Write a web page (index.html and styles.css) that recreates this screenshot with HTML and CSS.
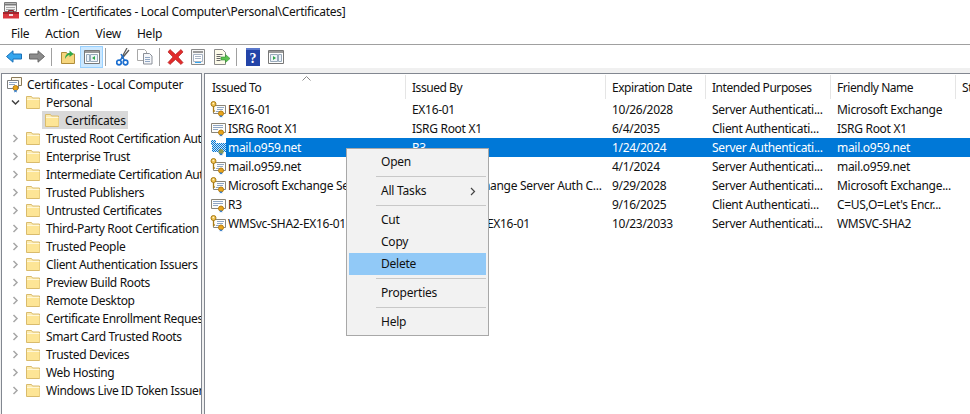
FILE: index.html
```html
<!DOCTYPE html>
<html lang="en">
<head>
<meta charset="utf-8">
<title>certlm</title>
<link rel="stylesheet" href="styles.css">
</head>
<body>
<svg class="defs" width="0" height="0" aria-hidden="true">
  <defs>
    <pattern id="dither" width="2" height="2" patternUnits="userSpaceOnUse">
      <path d="M0 0h2v2H0z" fill="#0078d7"/>
      <path d="M0 0h1v1H0zM1 1h1v1H1z" fill="#cfe2f3"/>
    </pattern>
    <symbol id="folder" viewBox="0 0 16 16">
      <path d="M1.500 2.500h5l1 1.500h7v10.500h-13z" fill="#fcebb0" stroke="#d9bb6c"/>
      <path d="M2 6h12.500v8H2z" fill="#fde596"/>
      <path d="M2 5.500h12.500" stroke="#fff7d8"/>
    </symbol>
    <symbol id="chev-r" viewBox="0 0 9 9">
      <path d="M2.500 1l3.500 3.500L2.500 8" fill="none" stroke="#a6a6a6" stroke-width="1.500"/>
    </symbol>
    <symbol id="chev-d" viewBox="0 0 9 9">
      <path d="M1 2.500l3.500 3.500L8 2.500" fill="none" stroke="#404040" stroke-width="1.500"/>
    </symbol>
    <symbol id="root" viewBox="0 0 17 17">
      <path d="M5.500 1.500h10v8h-10z" fill="#fdf8ea" stroke="#8a7a58"/>
      <path d="M1.500 4.500h11v8h-11z" fill="#fff" stroke="#7d7d7d"/>
      <path d="M3 6.500h8M3 8.500h6" stroke="#8fa6c4"/>
      <circle cx="9.500" cy="12" r="2.500" fill="#e8a41c" stroke="#b77d10"/>
      <path d="M8.300 14v2.500l1.200-.8 1.200.8V14" fill="#3a7fc8"/>
    </symbol>
    <symbol id="cert" viewBox="0 0 17 17">
      <path d="M1.500 3.500h14v9h-14z" fill="#fdfdfb" stroke="#8a8578"/>
      <path d="M3 5.500h10M3 7.500h10M3 9.500h5" stroke="#8fa6c4"/>
      <circle cx="11" cy="12.500" r="2.500" fill="#e8a41c" stroke="#b77d10"/>
      <path d="M9.800 14.500v2l1.200-.8 1.200.8v-2" fill="#3a7fc8"/>
    </symbol>
    <symbol id="certkey" viewBox="0 0 17 17">
      <path d="M3.500 4.500h12v8h-12z" fill="#fdfdfb" stroke="#8a8578"/>
      <path d="M7 6.500h7M7 8.500h6M6 10.500h4" stroke="#8fa6c4"/>
      <circle cx="3.500" cy="3" r="2.500" fill="#f1c556" stroke="#a87a14"/>
      <circle cx="3.300" cy="2.500" r=".8" fill="#fff6d0"/>
      <path d="M3.500 5.500v5l1.500-.8" fill="none" stroke="#a87a14" stroke-width="1.300"/>
      <circle cx="11" cy="12.500" r="2.500" fill="#e8a41c" stroke="#b77d10"/>
      <path d="M9.800 14.500v2l1.200-.8 1.200.8v-2" fill="#3a7fc8"/>
    </symbol>
    <symbol id="certsel" viewBox="0 0 17 17">
      <path d="M1 1h5v3h10v9h-2.500a2.500 2.500 0 0 1-5 0H2V6H1z" fill="url(#dither)"/>
      <circle cx="11" cy="12.500" r="2.500" fill="#8a9a5a"/>
      <path d="M9.800 14.500v2l1.200-.8 1.200.8v-2" fill="#2a78c8"/>
    </symbol>
  </defs>
</svg>

<header class="titlebar">
  <svg width="18" height="18" viewBox="0 0 18 18" aria-hidden="true">
    <path d="M1.500 .5h12v9h-12z" fill="#f3f3f3" stroke="#7a7a7a"/>
    <path d="M1.500 2.500h12" stroke="#7a7a7a" stroke-width="2"/>
    <path d="M3 5.500h9M3 7.500h9" stroke="#a8a8a8"/>
    <path d="M5.500 8.500h5v2h-5z" fill="none" stroke="#8f1e26"/>
    <path d="M0 10h16v6.500H0z" fill="#d8363e"/>
    <path d="M0 10h16v2H0z" fill="#a5242c"/>
    <path d="M6 12h4v2H6z" fill="#f5dcde"/>
  </svg>
  <span>certlm - [Certificates - Local Computer\Personal\Certificates]</span>
</header>

<nav class="menubar">
  <span>File</span><span>Action</span><span>View</span><span>Help</span>
</nav>

<div class="toolbar">
  <svg width="16" height="13" viewBox="0 0 16 13" aria-hidden="true"><path d="M.5 6.500L7 .8V4h8.500v5H7v3.200z" fill="#35a6ee" stroke="#1a70b8"/></svg>
  <svg class="ml7" width="16" height="13" viewBox="0 0 16 13" aria-hidden="true"><path d="M15.500 6.500L9 .8V4H.5v5H9v3.200z" fill="#8c8c8c" stroke="#666"/></svg>
  <i class="tsep ml6"></i>
  <svg class="ml8" width="16" height="16" viewBox="0 0 16 16" aria-hidden="true"><path d="M1.500 3.500h5l1 1.500h7v9.500h-13z" fill="#f6d67e" stroke="#b08d3a"/><path d="M5 10c0-3.500 2-6 4.500-6V1.500l4 3.500-4 3V6C8 6 6 8 5 10z" fill="#2fa84a"/></svg>
  <span class="tbtn ml4"><svg width="16" height="16" viewBox="0 0 16 16" aria-hidden="true"><path d="M.5 1.500h15v13H.5z" fill="#fff" stroke="#777"/><path d="M1 2h14v2H1z" fill="#9a9a9a"/><path d="M2.500 5.500h3v7h-3zM6.500 5.500h7v7h-7z" fill="#eef3f8" stroke="#9ab"/><path d="M11 7v4L8 9z" fill="#2fa84a"/></svg></span>
  <i class="tsep ml2"></i>
  <svg class="ml10" width="14" height="18" viewBox="0 0 14 18" aria-hidden="true"><path d="M11 0L5.500 10M13 2L6 10.500" stroke="#5c5c5c" stroke-width="1.300" fill="none"/><circle cx="3" cy="14.500" r="2.300" fill="none" stroke="#1c6fd0" stroke-width="1.700"/><circle cx="9.500" cy="14.500" r="2.300" fill="none" stroke="#1c6fd0" stroke-width="1.700"/><path d="M4 12.500L7.500 8M8.500 12.500L5 6" stroke="#1c6fd0" stroke-width="1.500"/></svg>
  <svg class="ml7" width="16" height="16" viewBox="0 0 16 16" aria-hidden="true"><path d="M.5.500h7l2 2v9h-9z" fill="#fff" stroke="#a8a8a8"/><path d="M6.500 4.500h6l2.500 2.500v8h-8.500z" fill="#f4f6f9" stroke="#8a8f98"/><path d="M8 8.500h5M8 10.500h5M8 12.500h5" stroke="#8fa6c4"/></svg>
  <i class="tsep ml6"></i>
  <svg class="ml7" width="17" height="16" viewBox="0 0 17 16" aria-hidden="true"><path d="M1 3l2-2.500 5.500 5L14 .5 16 3l-5 5 5 5.500-2 2-5.500-5-5.500 5-2-2L6 8z" fill="#e22b2b" stroke="#a81818" stroke-width=".6"/></svg>
  <svg class="ml6" width="16" height="16" viewBox="0 0 16 16" aria-hidden="true"><path d="M1.500.5h13v15h-13z" fill="#f6f6f6" stroke="#8a8a8a"/><path d="M3 2h10v2H3z" fill="#9a9a9a"/><path d="M3.500 5.500h9v7h-9z" fill="#fff" stroke="#a8b4c4"/><path d="M5 7.500h6M5 9.500h6" stroke="#a8b4c4"/><path d="M5 13.500h6" stroke="#35a6ee"/></svg>
  <svg class="ml7" width="17" height="16" viewBox="0 0 17 16" aria-hidden="true"><path d="M1.500.5h8l3 3v12h-11z" fill="#fdfbe9" stroke="#8a8a8a"/><path d="M3.500 5.500h6M3.500 7.500h4M3.500 9.500h4M3.500 11.500h4" stroke="#666"/><path d="M8 8h4.500V5.500L17 9.500l-4.500 4V11H8z" fill="#5cc34f" stroke="#2f8a30" stroke-width=".6"/></svg>
  <i class="tsep ml6"></i>
  <svg class="ml9" width="14" height="18" viewBox="0 0 14 18" aria-hidden="true"><path d="M0 0h14v18H0z" fill="#2344a8"/><path d="M0 0h14v2H0z" fill="#5a78cc"/><text x="7" y="14.500" class="helpq">?</text></svg>
  <svg class="ml8" width="16" height="16" viewBox="0 0 16 16" aria-hidden="true"><path d="M.5 1.500h15v13H.5z" fill="#fff" stroke="#777"/><path d="M1 2h14v2H1z" fill="#9a9a9a"/><path d="M2.500 5.500h7v7h-7zM10.500 5.500h3v7h-3z" fill="#eef3f8" stroke="#9ab"/><path d="M5 7v4L8 9z" fill="#2fa84a"/></svg>
</div>

<main class="panes">
  <aside class="tree">
    <div class="node"><svg class="rooticon" width="17" height="17" aria-hidden="true"><use href="#root"/></svg><span>Certificates - Local Computer</span></div>
    <div class="node l1"><svg class="chev" width="9" height="9" aria-hidden="true"><use href="#chev-d"/></svg><svg class="fld" width="16" height="16" aria-hidden="true"><use href="#folder"/></svg><span>Personal</span></div>
    <div class="node l2"><span class="curbox"><svg class="fld" width="16" height="16" aria-hidden="true"><use href="#folder"/></svg><span>Certificates</span></span></div>
    <div class="node l1"><svg class="chev" width="9" height="9" aria-hidden="true"><use href="#chev-r"/></svg><svg class="fld" width="16" height="16" aria-hidden="true"><use href="#folder"/></svg><span>Trusted Root Certification Authorities</span></div>
    <div class="node l1"><svg class="chev" width="9" height="9" aria-hidden="true"><use href="#chev-r"/></svg><svg class="fld" width="16" height="16" aria-hidden="true"><use href="#folder"/></svg><span>Enterprise Trust</span></div>
    <div class="node l1"><svg class="chev" width="9" height="9" aria-hidden="true"><use href="#chev-r"/></svg><svg class="fld" width="16" height="16" aria-hidden="true"><use href="#folder"/></svg><span>Intermediate Certification Authorities</span></div>
    <div class="node l1"><svg class="chev" width="9" height="9" aria-hidden="true"><use href="#chev-r"/></svg><svg class="fld" width="16" height="16" aria-hidden="true"><use href="#folder"/></svg><span>Trusted Publishers</span></div>
    <div class="node l1"><svg class="chev" width="9" height="9" aria-hidden="true"><use href="#chev-r"/></svg><svg class="fld" width="16" height="16" aria-hidden="true"><use href="#folder"/></svg><span>Untrusted Certificates</span></div>
    <div class="node l1"><svg class="chev" width="9" height="9" aria-hidden="true"><use href="#chev-r"/></svg><svg class="fld" width="16" height="16" aria-hidden="true"><use href="#folder"/></svg><span>Third-Party Root Certification Authorities</span></div>
    <div class="node l1"><svg class="chev" width="9" height="9" aria-hidden="true"><use href="#chev-r"/></svg><svg class="fld" width="16" height="16" aria-hidden="true"><use href="#folder"/></svg><span>Trusted People</span></div>
    <div class="node l1"><svg class="chev" width="9" height="9" aria-hidden="true"><use href="#chev-r"/></svg><svg class="fld" width="16" height="16" aria-hidden="true"><use href="#folder"/></svg><span>Client Authentication Issuers</span></div>
    <div class="node l1"><svg class="chev" width="9" height="9" aria-hidden="true"><use href="#chev-r"/></svg><svg class="fld" width="16" height="16" aria-hidden="true"><use href="#folder"/></svg><span>Preview Build Roots</span></div>
    <div class="node l1"><svg class="chev" width="9" height="9" aria-hidden="true"><use href="#chev-r"/></svg><svg class="fld" width="16" height="16" aria-hidden="true"><use href="#folder"/></svg><span>Remote Desktop</span></div>
    <div class="node l1"><svg class="chev" width="9" height="9" aria-hidden="true"><use href="#chev-r"/></svg><svg class="fld" width="16" height="16" aria-hidden="true"><use href="#folder"/></svg><span>Certificate Enrollment Requests</span></div>
    <div class="node l1"><svg class="chev" width="9" height="9" aria-hidden="true"><use href="#chev-r"/></svg><svg class="fld" width="16" height="16" aria-hidden="true"><use href="#folder"/></svg><span>Smart Card Trusted Roots</span></div>
    <div class="node l1"><svg class="chev" width="9" height="9" aria-hidden="true"><use href="#chev-r"/></svg><svg class="fld" width="16" height="16" aria-hidden="true"><use href="#folder"/></svg><span>Trusted Devices</span></div>
    <div class="node l1"><svg class="chev" width="9" height="9" aria-hidden="true"><use href="#chev-r"/></svg><svg class="fld" width="16" height="16" aria-hidden="true"><use href="#folder"/></svg><span>Web Hosting</span></div>
    <div class="node l1"><svg class="chev" width="9" height="9" aria-hidden="true"><use href="#chev-r"/></svg><svg class="fld" width="16" height="16" aria-hidden="true"><use href="#folder"/></svg><span>Windows Live ID Token Issuer</span></div>
  </aside>

  <section class="list">
    <div class="hdr">
      <span class="hc c1">Issued To<svg class="sort" width="9" height="5" viewBox="0 0 9 5" aria-hidden="true"><path d="M.5 4.500l4-4 4 4" fill="none" stroke="#8a8a8a"/></svg></span>
      <span class="hc c2">Issued By</span>
      <span class="hc c3">Expiration Date</span>
      <span class="hc c4">Intended Purposes</span>
      <span class="hc c5">Friendly Name</span>
      <span class="hc c6">St</span>
    </div>
    <div class="row"><span class="cell c1"><svg width="17" height="17" aria-hidden="true"><use href="#certkey"/></svg><b class="nm">EX16-01</b></span><span class="cell c2">EX16-01</span><span class="cell c3">10/26/2028</span><span class="cell c4">Server Authenticati...</span><span class="cell c5">Microsoft Exchange</span></div>
    <div class="row"><span class="cell c1"><svg width="17" height="17" aria-hidden="true"><use href="#cert"/></svg><b class="nm">ISRG Root X1</b></span><span class="cell c2">ISRG Root X1</span><span class="cell c3">6/4/2035</span><span class="cell c4">Client Authenticati...</span><span class="cell c5">ISRG Root X1</span></div>
    <div class="row sel"><span class="cell c1"><svg width="17" height="17" aria-hidden="true"><use href="#certsel"/></svg><b class="nm">mail.o959.net</b></span><span class="cell c2">R3</span><span class="cell c3">1/24/2024</span><span class="cell c4">Server Authenticati...</span><span class="cell c5">mail.o959.net</span></div>
    <div class="row"><span class="cell c1"><svg width="17" height="17" aria-hidden="true"><use href="#certkey"/></svg><b class="nm">mail.o959.net</b></span><span class="cell c2">R3</span><span class="cell c3">4/1/2024</span><span class="cell c4">Server Authenticati...</span><span class="cell c5">mail.o959.net</span></div>
    <div class="row"><span class="cell c1"><svg width="17" height="17" aria-hidden="true"><use href="#certkey"/></svg><b class="nm">Microsoft Exchange Server Auth C...</b></span><span class="cell c2">Microsoft Exchange Server Auth C...</span><span class="cell c3">9/29/2028</span><span class="cell c4">Server Authenticati...</span><span class="cell c5">Microsoft Exchange...</span></div>
    <div class="row"><span class="cell c1"><svg width="17" height="17" aria-hidden="true"><use href="#cert"/></svg><b class="nm">R3</b></span><span class="cell c2">ISRG Root X1</span><span class="cell c3">9/16/2025</span><span class="cell c4">Client Authenticati...</span><span class="cell c5">C=US,O=Let's Encr...</span></div>
    <div class="row"><span class="cell c1"><svg width="17" height="17" aria-hidden="true"><use href="#certkey"/></svg><b class="nm">WMSvc-SHA2-EX16-01</b></span><span class="cell c2">WMSvc-SHA2-EX16-01</span><span class="cell c3">10/23/2033</span><span class="cell c4">Server Authenticati...</span><span class="cell c5">WMSVC-SHA2</span></div>
  </section>
</main>

<div class="ctx" role="menu">
  <div class="mi">Open</div>
  <hr>
  <div class="mi">All Tasks<svg class="arrow" width="6" height="9" viewBox="0 0 6 9" aria-hidden="true"><path d="M1 1l3.500 3.500L1 8" fill="none" stroke="#444" stroke-width="1.200"/></svg></div>
  <hr>
  <div class="mi">Cut</div>
  <div class="mi">Copy</div>
  <div class="mi hot">Delete</div>
  <hr>
  <div class="mi">Properties</div>
  <hr>
  <div class="mi">Help</div>
</div>
</body>
</html>
```
FILE: styles.css
```css
* { box-sizing: border-box; }
html, body { margin: 0; height: 100%; }
body {
  width: 970px;
  height: 414px;
  overflow: hidden;
  background: #fff;
  font-family: "Noto Sans", "Open Sans", sans-serif;
  font-size: 12px;
  letter-spacing: -.22px;
  color: #111;
  position: relative;
  display: flex;
  flex-direction: column;
}
.defs { position: absolute; }
.titlebar {
  height: 22px;
  display: flex;
  align-items: center;
  gap: 3px;
  padding-left: 3px;
  flex: none;
  letter-spacing: -.27px;
}
.menubar {
  height: 23px;
  display: flex;
  align-items: center;
  gap: 16px;
  padding-left: 11px;
  flex: none;
  border-bottom: 1px solid #a0a0a0;
}
.toolbar {
  height: 23px;
  flex: none;
  display: flex;
  align-items: center;
  padding-left: 6px;
  background: #fff;
}
.toolbar svg { flex: none; }
.ml2 { margin-left: 2px; }
.ml4 { margin-left: 4px; }
.ml6 { margin-left: 6px; }
.ml7 { margin-left: 7px; }
.ml8 { margin-left: 8px; }
.ml9 { margin-left: 9px; }
.ml10 { margin-left: 10px; }
.tsep { width: 1px; height: 18px; background: #a0a0a0; flex: none; }
.tbtn {
  width: 23px;
  height: 22px;
  flex: none;
  display: flex;
  align-items: center;
  justify-content: center;
  background: #cce8ff;
  border: 1px solid #99d1ff;
}
.helpq { font: bold 14px "Liberation Serif", serif; fill: #fff; text-anchor: middle; }
.panes {
  flex: 1;
  display: flex;
  gap: 2px;
  padding: 5px 0 0 1px;
  background: #f0f0f0;
  min-height: 0;
}
.tree {
  width: 201px;
  background: #fff;
  border: 1px solid #828790;
  border-bottom: 0;
  padding-top: 1px;
  overflow: hidden;
}
.node {
  height: 18px;
  display: flex;
  align-items: center;
  white-space: nowrap;
}
.rooticon { margin: 0 4px 0 4px; }
.l1 { padding-left: 9px; letter-spacing: -.36px; }
.chev { margin-right: 5px; flex: none; }
.fld { flex: none; margin-right: 5px; }
.l2 { padding-left: 40px; }
.curbox { display: flex; align-items: center; height: 18px; background: #d9d9d9; padding: 0 2px; }
.list {
  flex: 1;
  background: #fff;
  border: 1px solid #828790;
  border-right: 0;
  border-bottom: 0;
  overflow: hidden;
  min-width: 0;
}
.hdr { height: 26px; display: flex; align-items: center; letter-spacing: -.45px; }
.hc {
  height: 24px;
  display: flex;
  align-items: center;
  padding-left: 6px;
  border-right: 1px solid #e5e5e5;
  position: relative;
  flex: none;
}
.hc.c1 { width: 201px; padding-left: 7px; }
.hc:last-child { border-right: 0; }
.sort { position: absolute; left: 97px; top: 1px; }
.c1 { width: 200px; }
.c2 { width: 200px; }
.c3 { width: 100px; }
.c4 { width: 125px; }
.c5 { width: 125px; }
.c6 { width: 15px; }
.row { height: 19px; display: flex; align-items: center; white-space: nowrap; letter-spacing: -.3px; }
.cell { padding-left: 7px; flex: none; overflow: hidden; }
.cell.c1 { display: flex; align-items: center; padding-left: 5px; }
.cell.c1 svg { flex: none; }
.nm { font-weight: 400; padding-left: 1px; display: block; line-height: 19px; }
.sel { color: #fff; background: linear-gradient(90deg, #fff 21px, #0078d7 21px); }
.ctx {
  position: absolute;
  left: 346px;
  top: 148px;
  width: 143px;
  height: 188px;
  background: #f2f2f2;
  border: 1px solid #a8a8a8;
  padding: 2px;
}
.mi {
  height: 22px;
  line-height: 22px;
  padding-left: 32px;
  color: #111;
  position: relative;
}
.hot { background: #91c9f7; }
.arrow { position: absolute; right: 10px; top: 7px; }
.ctx hr {
  margin: 3px 0 3px 27px;
  border: 0;
  border-top: 1px solid #c8c8c8;
  height: 1px;
}
```
